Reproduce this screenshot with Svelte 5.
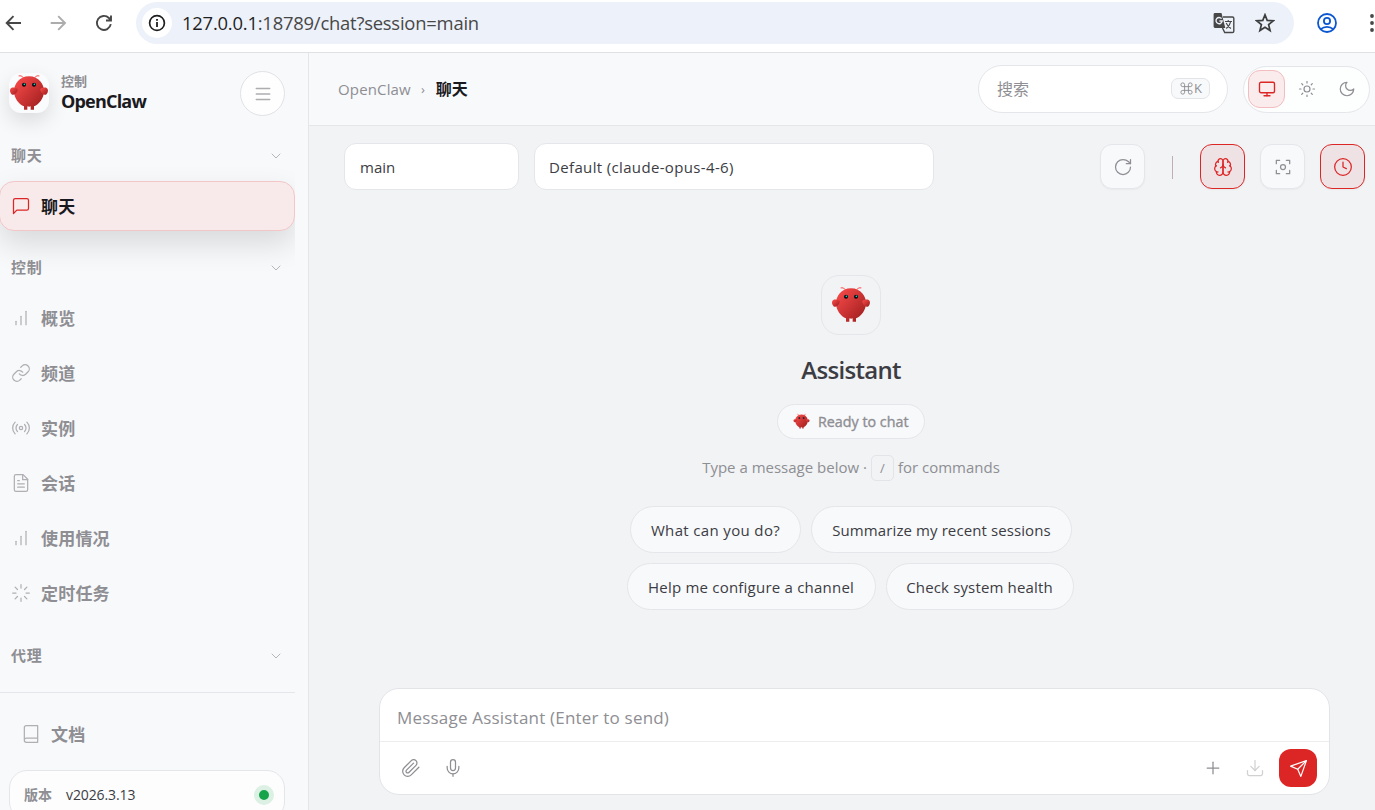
<script>
    const icons = {
        menu: ['M4 5.5h16', 'M4 12h16', 'M4 18.5h16'],
        chevron: ['m6 9 6 6 6-6'],
        chat: ['M21 15a2 2 0 0 1-2 2H7l-4 4V5a2 2 0 0 1 2-2h14a2 2 0 0 1 2 2z'],
        bars: ['M12 20V10', 'M18 20V4', 'M6 20v-4'],
        link: [
            'M10 13a5 5 0 0 0 7.54.54l3-3a5 5 0 0 0-7.07-7.07l-1.72 1.71',
            'M14 11a5 5 0 0 0-7.54-.54l-3 3a5 5 0 0 0 7.07 7.07l1.71-1.71'
        ],
        radio: [
            'M14 12a2 2 0 1 1-4 0 2 2 0 0 1 4 0',
            'M16.24 7.76a6 6 0 0 1 0 8.49',
            'M7.76 16.24a6 6 0 0 1 0-8.49',
            'M19.07 4.93a10 10 0 0 1 0 14.14',
            'M4.93 19.07a10 10 0 0 1 0-14.14'
        ],
        file: [
            'M14.5 2H6a2 2 0 0 0-2 2v16a2 2 0 0 0 2 2h12a2 2 0 0 0 2-2V7.5L14.5 2z',
            'M14 2v6h6', 'M16 13H8', 'M16 17H8', 'M10 9H8'
        ],
        loader: [
            'M12 2v4', 'M12 18v4', 'm4.93 4.93 2.83 2.83', 'm16.24 16.24 2.83 2.83',
            'M2 12h4', 'M18 12h4', 'm4.93 19.07 2.83-2.83', 'm16.24 7.76 2.83-2.83'
        ],
        book: ['M4 19.5v-15A2.5 2.5 0 0 1 6.5 2H20v20H6.5a2.5 2.5 0 0 1 0-5H20'],
        monitor: ['M4 3h16a2 2 0 0 1 2 2v10a2 2 0 0 1-2 2H4a2 2 0 0 1-2-2V5a2 2 0 0 1 2-2z', 'M8 21h8', 'M12 17v4'],
        sun: [
            'M16 12a4 4 0 1 1-8 0 4 4 0 0 1 8 0', 'M12 2v2', 'M12 20v2', 'm4.93 4.93 1.41 1.41',
            'm17.66 17.66 1.41 1.41', 'M2 12h2', 'M20 12h2', 'm6.34 17.66-1.41 1.41', 'm19.07 4.93-1.41 1.41'
        ],
        moon: ['M12 3a6 6 0 0 0 9 9 9 9 0 1 1-9-9Z'],
        refresh: ['M21 12a9 9 0 1 1-9-9c2.52 0 4.93 1 6.74 2.74L21 8', 'M21 3v5h-5'],
        brain: [
            'M12 5a3 3 0 1 0-5.997.125 4 4 0 0 0-2.526 5.77 4 4 0 0 0 .556 6.588A4 4 0 1 0 12 18Z',
            'M12 5a3 3 0 1 1 5.997.125 4 4 0 0 1 2.526 5.77 4 4 0 0 1-.556 6.588A4 4 0 1 1 12 18Z',
            'M15 13a4.5 4.5 0 0 1-3-4 4.5 4.5 0 0 1-3 4',
            'M17.6 6.5a3 3 0 0 0 .4-1.4', 'M6 5.1a3 3 0 0 0 .4 1.4',
            'M3.5 10.9a4 4 0 0 1 .6-.4', 'M19.9 10.5a4 4 0 0 1 .6.4',
            'M6 18a4 4 0 0 1-2-.5', 'M20 17.5a4 4 0 0 1-2 .5'
        ],
        focus: [
            'M15 12a3 3 0 1 1-6 0 3 3 0 0 1 6 0', 'M4 8V4h4', 'M16 4h4v4', 'M20 16v4h-4', 'M8 20H4v-4'
        ],
        clock: ['M22 12a10 10 0 1 1-20 0 10 10 0 0 1 20 0', 'M12 6v6l4 2'],
        clip: ['m21.44 11.05-9.19 9.19a6 6 0 0 1-8.49-8.49l8.57-8.57A4 4 0 1 1 18 8.84l-8.59 8.57a2 2 0 0 1-2.83-2.83l8.49-8.48'],
        mic: ['M12 2a3 3 0 0 0-3 3v7a3 3 0 0 0 6 0V5a3 3 0 0 0-3-3Z', 'M19 10v2a7 7 0 0 1-14 0v-2', 'M12 19v3'],
        plus: ['M5 12h14', 'M12 5v14'],
        download: ['M21 15v4a2 2 0 0 1-2 2H5a2 2 0 0 1-2-2v-4', 'm7 10 5 5 5-5', 'M12 15V3'],
        send: ['m22 2-7 20-4-9-9-4Z', 'M22 2 11 13']
    };

    const controlItems = [
        { icon: 'bars', label: '概览' },
        { icon: 'link', label: '频道' },
        { icon: 'radio', label: '实例' },
        { icon: 'file', label: '会话' },
        { icon: 'bars', label: '使用情况' },
        { icon: 'loader', label: '定时任务' }
    ];

    const suggestions = [
        ['What can you do?', 'Summarize my recent sessions'],
        ['Help me configure a channel', 'Check system health']
    ];

    let theme = $state('monitor');
</script>

{#snippet icon(name, size = 18, width = 1.5)}
    <svg class="icon" width={size} height={size} viewBox="0 0 24 24" stroke-width={width}>
        {#each icons[name] as d}
            <path {d} />
        {/each}
    </svg>
{/snippet}

{#snippet mascot(id, size)}
    <svg class="mascot" width={size} height={size} viewBox="0 0 120 120">
        <defs>
            <linearGradient {id} x1="0%" y1="0%" x2="100%" y2="100%">
                <stop offset="0%" stop-color="#ff4d4d" />
                <stop offset="100%" stop-color="#991b1b" />
            </linearGradient>
        </defs>
        <g fill="url(#{id})">
            <path d="M60 10C30 10 15 35 15 55C15 75 30 95 45 100L45 110L55 110L55 100C55 100 60 102 65 100L65 110L75 110L75 100C90 95 105 75 105 55C105 35 90 10 60 10Z" />
            <path d="M20 45C5 40 0 50 5 60C10 70 20 65 25 55C28 48 25 45 20 45Z" />
            <path d="M100 45C115 40 120 50 115 60C110 70 100 65 95 55C92 48 95 45 100 45Z" />
        </g>
        <path d="M45 15Q35 5 30 8M75 15Q85 5 90 8" fill="none" stroke="#ff4d4d" stroke-width="3" stroke-linecap="round" />
        <circle cx="45" cy="35" r="6" fill="#050810" />
        <circle cx="75" cy="35" r="6" fill="#050810" />
        <circle cx="46" cy="34" r="2.5" fill="#00e5cc" />
        <circle cx="76" cy="34" r="2.5" fill="#00e5cc" />
    </svg>
{/snippet}

<div class="window">
    <div class="browser">
        <svg class="nav-icon" width="20" height="20" viewBox="0 0 20 20"><path d="M17 10H3M9.5 3.2 2.7 10l6.8 6.8" /></svg>
        <svg class="nav-icon faded" width="20" height="20" viewBox="0 0 20 20"><path d="M1.7 10h14M9.2 3.2 16 10l-6.8 6.8" /></svg>
        <svg class="nav-icon" width="20" height="20" viewBox="0 0 20 20"><path d="M16.8 11.2A7 7 0 1 1 14.9 5l2 2.2M17 2.5v5h-5" /></svg>
        <div class="address">
            <span class="info">
                <svg width="18" height="18" viewBox="0 0 18 18">
                    <circle cx="9" cy="9" r="7.4" fill="none" stroke="#1f1f1f" stroke-width="1.7" />
                    <path d="M9 8v5M9 5v1.8" stroke="#1f1f1f" stroke-width="1.8" />
                </svg>
            </span>
            <span class="url"><b>127.0.0.1</b>:18789/chat?session=main</span>
            <svg class="translate" width="22" height="22" viewBox="0 0 22 22">
                <path d="M10 5h9.5a1.3 1.3 0 0 1 1.3 1.3v12.9a1.3 1.3 0 0 1-1.3 1.3H11.7L9.5 16" fill="none" stroke="#474747" stroke-width="1.4" />
                <path d="M2 1h6.5l3.8 15H2a1.4 1.4 0 0 1-1.4-1.4V2.4A1.4 1.4 0 0 1 2 1z" fill="#474747" />
                <path d="M8.6 6.7A3.1 3.1 0 1 0 9.2 9H6.4" fill="none" stroke="#edf1fa" stroke-width="1.4" />
                <path d="M12 9.5h7M15.2 8v1.5M17.6 9.5c-.6 3-2.3 5.6-4.4 7M13.2 11c1 2.4 2.7 4.4 4.8 5.5" fill="none" stroke="#474747" stroke-width="1.1" />
            </svg>
            <svg class="star" width="20" height="20" viewBox="0 0 20 20">
                <path d="m10 1.8 2.2 5.6 6 .4-4.6 3.8 1.5 5.9-5.1-3.3-5.1 3.3 1.5-5.9L1.8 7.8l6-.4z" fill="none" stroke="#3c3d3d" stroke-width="1.7" />
            </svg>
        </div>
        <svg class="profile" width="20" height="20" viewBox="0 0 20 20">
            <g fill="none" stroke="#0b57d0" stroke-width="1.8">
                <circle cx="10" cy="10" r="9" />
                <circle cx="10" cy="8" r="3.1" />
                <path d="M3.8 16.2c3.5-3.2 8.9-3.2 12.4 0" />
            </g>
        </svg>
        <svg class="dots" width="4" height="18" viewBox="0 0 4 18">
            <circle cx="2" cy="2" r="1.9" /><circle cx="2" cy="9" r="1.9" /><circle cx="2" cy="16" r="1.9" />
        </svg>
    </div>

    <div class="shell">
        <aside>
            <div class="brand">
                <span class="logo">{@render mascot('logo-side', 40)}</span>
                <div class="brand-text">
                    <span class="eyebrow">控制</span>
                    <span class="name">OpenClaw</span>
                </div>
                <button class="collapse" aria-label="menu">{@render icon('menu', 20, 1.8)}</button>
            </div>
            <nav>
                <div class="section">聊天 {@render icon('chevron', 16)}</div>
                <div class="item active">{@render icon('chat', 20)}<span>聊天</span></div>
                <div class="section spaced">控制 {@render icon('chevron', 16)}</div>
                <div class="items">
                    {#each controlItems as item}
                        <div class="item">{@render icon(item.icon, 20)}<span>{item.label}</span></div>
                    {/each}
                </div>
                <div class="section last">代理 {@render icon('chevron', 16)}</div>
            </nav>
            <div class="footer">
                <div class="item docs">{@render icon('book', 20)}<span>文档</span></div>
                <div class="version">
                    <span class="version-label">版本</span>
                    <span class="version-number">v2026.3.13</span>
                    <i class="status"></i>
                </div>
            </div>
        </aside>

        <main>
            <header>
                <span class="crumb">OpenClaw</span>
                <span class="sep">›</span>
                <span class="current">聊天</span>
                <div class="search">
                    <span>搜索</span>
                    <kbd>
                        <svg width="15" height="15" viewBox="0 0 24 24"><path d="M15 6v12a3 3 0 1 0 3-3H6a3 3 0 1 0 3 3V6a3 3 0 1 0-3 3h12a3 3 0 1 0-3-3" /></svg>K
                    </kbd>
                </div>
                <div class="themes">
                    {#each ['monitor', 'sun', 'moon'] as mode}
                        <button class:on={theme === mode} aria-label={mode} onclick={() => (theme = mode)}>
                            {@render icon(mode, 18, mode === 'monitor' ? 1.8 : 1.6)}
                        </button>
                    {/each}
                </div>
            </header>

            <div class="controls">
                <div class="select session">main</div>
                <div class="select model">Default (claude-opus-4-6)</div>
                <button class="tool first" aria-label="refresh">{@render icon('refresh', 20)}</button>
                <i class="divider"></i>
                <button class="tool on" aria-label="thinking">{@render icon('brain', 20)}</button>
                <button class="tool" aria-label="focus">{@render icon('focus', 20)}</button>
                <button class="tool on" aria-label="history">{@render icon('clock', 20)}</button>
            </div>

            <div class="welcome">
                <div class="avatar">{@render mascot('logo-main', 40)}</div>
                <h1>Assistant</h1>
                <div class="ready">{@render mascot('logo-ready', 17)}<span>Ready to chat</span></div>
                <p><span>Type a message below ·</span><kbd>/</kbd><span>for commands</span></p>
                <div class="suggestions">
                    {#each suggestions as row, r}
                        <div class="row">
                            {#each row as text, c}
                                <button class="chip chip-{r}{c}">{text}</button>
                            {/each}
                        </div>
                    {/each}
                </div>
            </div>

            <div class="composer">
                <div class="input">Message Assistant (Enter to send)</div>
                <div class="actions">
                    {@render icon('clip', 20)}
                    {@render icon('mic', 20)}
                    <span class="grow"></span>
                    {@render icon('plus', 20)}
                    <span class="dim">{@render icon('download', 20)}</span>
                    <button class="send" aria-label="send">{@render icon('send', 19)}</button>
                </div>
            </div>
        </main>
    </div>
</div>

<style>
    :global(body) {
        overflow: hidden;
    }

    .window {
        width: 1375px;
        height: 810px;
        overflow: hidden;
        display: flex;
        flex-direction: column;
        background: #f1f3f5;
        color: #3c3c43;
        font-family: 'Open Sans', 'Noto Sans CJK SC', sans-serif;
        font-size: 15px;
    }

    .window * {
        box-sizing: border-box;
    }

    svg {
        display: block;
        flex: none;
    }

    button {
        font: inherit;
        color: inherit;
        padding: 0;
        display: flex;
        align-items: center;
        justify-content: center;
    }

    .icon {
        fill: none;
        stroke: currentColor;
        stroke-linecap: round;
        stroke-linejoin: round;
    }

    /* browser bar */
    .browser {
        height: 53px;
        flex: none;
        display: flex;
        align-items: center;
        padding: 0 0 7px 4px;
        background: #fff;
        border-bottom: 1px solid #dfe1e4;
    }

    .nav-icon {
        margin-right: 25px;
        fill: none;
        stroke: #474747;
        stroke-width: 1.9;
    }

    .nav-icon.faded {
        stroke: #acacac;
    }

    .address {
        width: 1158px;
        height: 42px;
        margin-left: -3px;
        display: flex;
        align-items: center;
        padding: 0 19px 0 6px;
        border-radius: 21px;
        background: #edf1fa;
    }

    .info {
        width: 30px;
        height: 30px;
        display: flex;
        align-items: center;
        justify-content: center;
        background: #fff;
        border-radius: 50%;
    }

    .url {
        flex: 1;
        margin-left: 10px;
        font-size: 18.4px;
        letter-spacing: -0.21px;
        color: #474747;
    }

    .url b {
        font-weight: 400;
        color: #1f1f1f;
    }

    .star {
        margin-left: 20px;
    }

    .profile {
        margin-left: 23px;
    }

    .dots {
        margin-left: 33px;
        fill: #474747;
    }

    .shell {
        flex: 1;
        min-height: 0;
        display: flex;
    }

    /* sidebar */
    aside {
        width: 309px;
        flex: none;
        display: flex;
        flex-direction: column;
        background: #f8f9fb;
        border-right: 1px solid #e5e6ea;
        color: #8e8e93;
    }

    .brand {
        height: 45px;
        flex: none;
        margin-top: 18px;
        padding: 0 23px 0 9px;
        display: flex;
        align-items: center;
    }

    .logo {
        margin-bottom: 2px;
        border-radius: 12px;
        background: #fafbfc;
        box-shadow: 0 8px 20px rgba(0, 0, 0, 0.12);
    }

    .brand-text {
        flex: 1;
        margin: 0 0 4px 12px;
        display: flex;
        flex-direction: column;
    }

    .eyebrow {
        font-size: 13px;
        line-height: 18px;
        font-weight: 700;
    }

    .name {
        font-size: 18px;
        line-height: 22px;
        font-weight: 700;
        letter-spacing: -0.8px;
        color: #1a1a1e;
    }

    .collapse {
        width: 45px;
        height: 45px;
        border: 1px solid #e1e2e6;
        border-radius: 50%;
        background: #fefefe;
        color: #adadb0;
    }

    nav {
        width: 295px;
        height: 577px;
        flex: none;
        overflow: hidden;
        border-bottom: 1px solid #e5e6ea;
    }

    .section {
        height: 30px;
        margin-top: 24px;
        padding: 0 11px 2px;
        display: flex;
        align-items: center;
        justify-content: space-between;
        font-size: 15px;
        font-weight: 700;
        letter-spacing: 0.8px;
    }

    .section .icon {
        margin-top: 3px;
        color: #b5b6ba;
    }

    .section.spaced {
        margin-top: 21px;
    }

    .section.last {
        margin-top: 22px;
    }

    .item {
        height: 50px;
        display: flex;
        align-items: center;
        padding-left: 11px;
        font-size: 17px;
        font-weight: 700;
        letter-spacing: 0.2px;
    }

    .item span {
        margin-left: 10px;
        padding-bottom: 2px;
    }

    .item .icon {
        color: #b0b0b4;
    }

    .item.active {
        margin-top: 11px;
        margin-left: -1px;
        border: 1px solid #f3c6c8;
        border-radius: 15px;
        background: #f8eaeb;
        color: #1a1a1e;
        box-shadow: 0 13px 30px rgba(0, 0, 0, 0.13);
    }

    .item.active .icon {
        color: #dc2626;
    }

    .items {
        margin-top: 11px;
        display: flex;
        flex-direction: column;
        gap: 5px;
    }

    .footer {
        padding: 16px 23px 0 9px;
    }

    .docs {
        padding-left: 12px;
    }

    .version {
        height: 50px;
        margin-top: 11px;
        padding: 0 10px 0 14px;
        display: flex;
        align-items: center;
        border: 1px solid #e5e6ea;
        border-radius: 18px;
        background: #fdfdfe;
        color: #3c3c43;
        font-size: 14px;
    }

    .version-label {
        margin-right: 14px;
        padding-bottom: 2px;
        font-weight: 700;
        color: #8e8e93;
    }

    .version-number {
        padding-bottom: 2px;
        letter-spacing: -0.1px;
    }

    .status {
        width: 20px;
        height: 20px;
        margin-left: auto;
        border: 5px solid #dcf0e4;
        border-radius: 50%;
        background: #16a34a;
    }

    /* main column */
    main {
        flex: 1;
        min-width: 0;
        display: flex;
        flex-direction: column;
    }

    header {
        height: 73px;
        flex: none;
        display: flex;
        align-items: center;
        padding: 0 5px 0 29px;
        background: #f8f9fb;
        border-bottom: 1px solid #e5e6ea;
        font-size: 15px;
        color: #8e8e93;
    }

    .crumb {
        letter-spacing: 0.15px;
    }

    .sep {
        margin: 0 10px;
        font-size: 13px;
    }

    .current {
        margin-left: 1px;
        padding-bottom: 2px;
        font-size: 16px;
        font-weight: 700;
        color: #1a1a1e;
    }

    .search {
        width: 250px;
        height: 48px;
        margin-left: auto;
        padding: 0 17px 0 18px;
        display: flex;
        align-items: center;
        justify-content: space-between;
        border: 1px solid #e5e6ea;
        border-radius: 24px;
        background: #fff;
        font-size: 16px;
    }

    .search span {
        padding-bottom: 2px;
    }

    kbd {
        display: flex;
        align-items: center;
        justify-content: center;
        border: 1px solid #e3e4e8;
        font-family: inherit;
    }

    .search kbd {
        width: 39px;
        height: 21px;
        margin-bottom: 2px;
        border-radius: 7px;
        background: #f8f9fb;
        font-size: 13px;
    }

    .search kbd svg {
        fill: none;
        stroke: currentColor;
        stroke-width: 1.5;
    }

    .themes {
        width: 127px;
        height: 47px;
        margin-left: 15px;
        padding: 0 4px;
        display: flex;
        align-items: center;
        gap: 3px;
        border: 1px solid #e5e6ea;
        border-radius: 24px;
        background: #fdfefe;
    }

    .themes button {
        width: 37px;
        height: 38px;
        border: 1px solid transparent;
        border-radius: 12px;
        background: none;
    }

    .themes button.on {
        border-color: #f3bcbe;
        background: #faecec;
        color: #dc2626;
    }

    .controls {
        height: 47px;
        flex: none;
        margin-top: 17px;
        padding: 0 10px 0 35px;
        display: flex;
        align-items: center;
    }

    .select {
        height: 47px;
        padding-left: 15px;
        display: flex;
        align-items: center;
        border: 1px solid #e5e6ea;
        border-radius: 12px;
        background: #fff;
        font-size: 15px;
    }

    .session {
        width: 175px;
    }

    .model {
        width: 400px;
        margin-left: 15px;
        padding-left: 14px;
        letter-spacing: 0.35px;
    }

    .tool {
        width: 45px;
        height: 45px;
        margin-left: 15px;
        border: 1px solid #e5e6ea;
        border-radius: 12px;
        background: #f8f9fb;
        color: #8e8e93;
        box-shadow: 0 1px 2px rgba(0, 0, 0, 0.04);
    }

    .tool.first {
        margin-left: auto;
    }

    .tool.on {
        border-color: #dc2626;
        background: #efe2e4;
        color: #dc2626;
    }

    .divider {
        width: 1px;
        height: 23px;
        margin: 2px 12px 0 27px;
        background: #c1adb8;
    }

    .welcome {
        height: 413px;
        flex: none;
        margin-top: 85px;
        padding-left: 18px;
        display: flex;
        flex-direction: column;
        align-items: center;
    }

    .avatar {
        width: 60px;
        height: 60px;
        display: flex;
        align-items: center;
        justify-content: center;
        border: 1px solid #e5e6e9;
        border-radius: 18px;
    }

    h1 {
        margin: 17px 0 0;
        font-size: 24px;
        line-height: 36px;
        font-weight: 600;
        letter-spacing: -0.7px;
    }

    .ready {
        width: 148px;
        height: 35px;
        margin-top: 16px;
        padding-left: 15px;
        display: flex;
        align-items: center;
        border: 1px solid #e5e6e9;
        border-radius: 18px;
        background: #f8f9fb;
        color: #8e8e93;
        font-size: 14.3px;
        white-space: nowrap;
        -webkit-text-stroke: 0.35px currentColor;
    }

    .ready span {
        margin-left: 8px;
    }

    p {
        height: 26px;
        margin: 16px 0 0;
        display: flex;
        align-items: center;
        color: #8e8e93;
        font-size: 15px;
    }

    p span {
        padding-bottom: 2px;
    }

    p kbd {
        width: 23px;
        height: 26px;
        margin: 0 4px;
        border-radius: 5px;
        font-size: 13px;
    }

    .suggestions {
        margin-top: 25px;
        display: flex;
        flex-direction: column;
        align-items: center;
        gap: 10px;
    }

    .row {
        display: flex;
        gap: 10px;
    }

    .chip {
        height: 47px;
        border: 1px solid #e5e6e9;
        border-radius: 24px;
        background: #f8f9fb;
        font-size: 15px;
        white-space: nowrap;
    }

    .chip-00 {
        width: 171px;
        letter-spacing: 0.35px;
    }

    .chip-01 {
        width: 261px;
        letter-spacing: 0.1px;
    }

    .chip-10 {
        width: 249px;
        margin-left: -1px;
        letter-spacing: 0.22px;
    }

    .chip-11 {
        width: 188px;
        margin-right: 1px;
        letter-spacing: 0.15px;
    }

    .composer {
        width: 951px;
        height: 107px;
        margin-left: 70px;
        border: 1px solid #e3e4e8;
        border-radius: 20px;
        background: #fff;
        color: #8e8e93;
    }

    .input {
        height: 53px;
        padding: 5px 0 0 17px;
        display: flex;
        align-items: center;
        border-bottom: 1px solid #ededf0;
        font-size: 17px;
        letter-spacing: 0.2px;
    }

    .actions {
        height: 52px;
        padding: 0 12px 0 21px;
        display: flex;
        align-items: center;
        gap: 22px;
    }

    .grow {
        flex: 1;
    }

    .dim {
        opacity: 0.4;
    }

    .send {
        width: 38px;
        height: 38px;
        margin-left: -8px;
        border: none;
        border-radius: 12px;
        background: #dc2626;
        color: #fff;
    }
</style>
